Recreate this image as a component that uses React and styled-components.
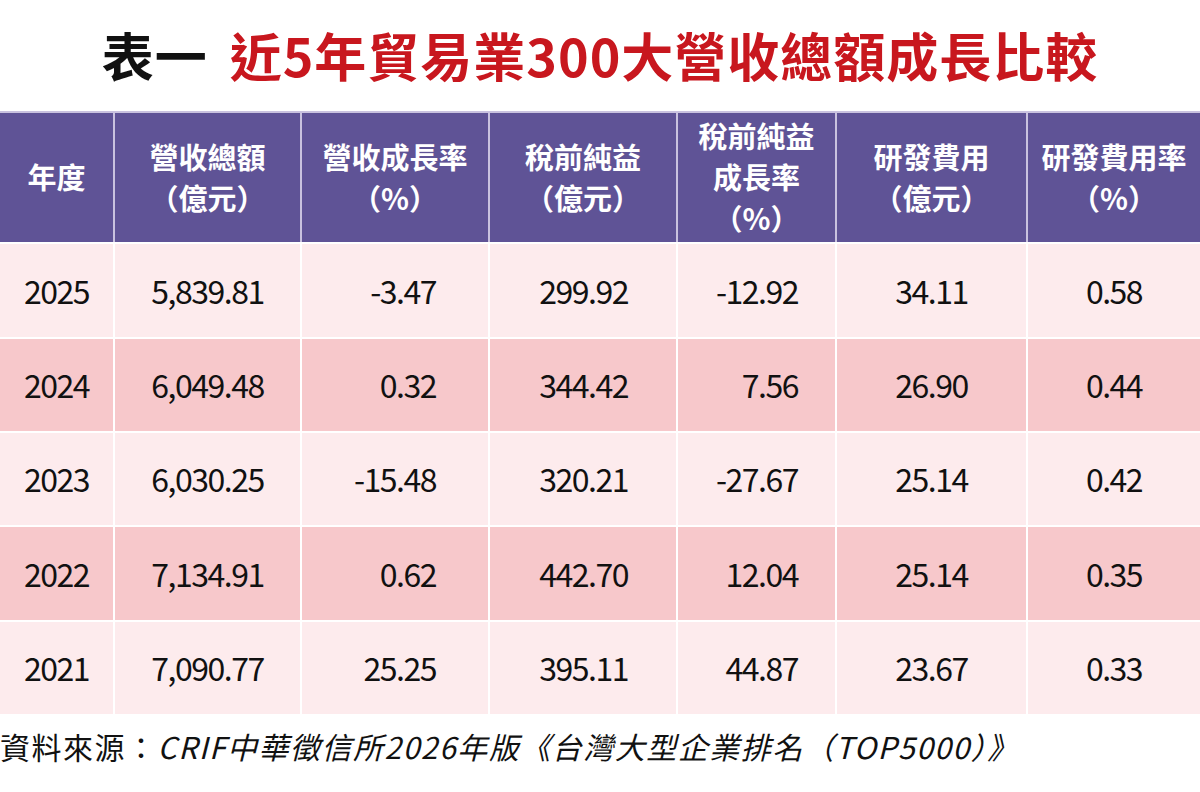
import styled, { createGlobalStyle } from "styled-components";

const GlobalStyle = createGlobalStyle`
  body {
    margin: 0;
    background: #ffffff;
    font-family: "Noto Sans CJK TC", "Noto Sans", sans-serif;
  }
`;

const COLS = "113px 187px 188px 188px 159px 191px 174px";

const Page = styled.div`
  width: 1200px;
  height: 792px;
  display: flex;
  flex-direction: column;
  background: #ffffff;
`;

const Title = styled.h1`
  margin: 0;
  height: 111px;
  display: flex;
  align-items: center;
  justify-content: center;
  gap: 22px;
  font-size: 52px;
  font-weight: 700;
  letter-spacing: 1px;
  line-height: 1;
  padding-bottom: 2px;
  box-sizing: border-box;
`;

const TitleLabel = styled.span`
  color: #111111;
`;

const TitleMain = styled.span`
  color: #c8171e;
`;

const Table = styled.div`
  display: flex;
  flex-direction: column;
`;

const HeaderRow = styled.div`
  display: grid;
  grid-template-columns: ${COLS};
  height: 131px;
  background: #5f5396;
  border-top: 2px solid #c9c2df;
  box-sizing: border-box;
`;

const HeadCell = styled.div`
  display: flex;
  flex-direction: column;
  align-items: center;
  justify-content: center;
  color: #ffffff;
  font-size: 29px;
  font-weight: 700;
  line-height: 41px;
  border-left: ${(p) => (p.$first ? "none" : "2px solid #c9c2df")};
  padding-bottom: 2px;
`;

const Row = styled.div`
  display: grid;
  grid-template-columns: ${COLS};
  height: ${(p) => p.$h}px;
  background: ${(p) => (p.$dark ? "#f7c8cb" : "#fdebed")};
  border-top: 2px solid #ffffff;
  box-sizing: border-box;
`;

const Cell = styled.div`
  display: flex;
  align-items: center;
  justify-content: ${(p) => (p.$align === "right" ? "flex-end" : "center")};
  padding-right: ${(p) => p.$pr || 0}px;
  font-size: 32px;
  letter-spacing: -1.5px;
  color: #111111;
  border-left: ${(p) => (p.$first ? "none" : "2px solid #ffffff")};
  padding-bottom: 2px;
`;

const Footer = styled.p`
  margin: 0;
  padding-top: 14px;
  font-size: 30px;
  letter-spacing: 1.5px;
  line-height: 36px;
  color: #111111;
  white-space: nowrap;
`;

const Source = styled.span`
  font-style: italic;
`;

const headers = [
  ["年度"],
  ["營收總額", "（億元）"],
  ["營收成長率", "（%）"],
  ["稅前純益", "（億元）"],
  ["稅前純益", "成長率", "（%）"],
  ["研發費用", "（億元）"],
  ["研發費用率", "（%）"],
];

// alignment per column: [align, paddingRight]
const layout = [
  ["center", 0],
  ["center", 0],
  ["right", 52],
  ["right", 48],
  ["right", 37],
  ["center", 0],
  ["center", 0],
];

const rows = [
  ["2025", "5,839.81", "-3.47", "299.92", "-12.92", "34.11", "0.58"],
  ["2024", "6,049.48", "0.32", "344.42", "7.56", "26.90", "0.44"],
  ["2023", "6,030.25", "-15.48", "320.21", "-27.67", "25.14", "0.42"],
  ["2022", "7,134.91", "0.62", "442.70", "12.04", "25.14", "0.35"],
  ["2021", "7,090.77", "25.25", "395.11", "44.87", "23.67", "0.33"],
];

const rowHeights = [95, 94, 94, 95, 94];

export default function App() {
  return (
    <>
      <GlobalStyle />
      <Page>
        <Title>
          <TitleLabel>表一</TitleLabel>
          <TitleMain>近5年貿易業300大營收總額成長比較</TitleMain>
        </Title>
        <Table>
          <HeaderRow>
            {headers.map((lines, i) => (
              <HeadCell key={i} $first={i === 0}>
                {lines.map((line) => (
                  <span key={line}>{line}</span>
                ))}
              </HeadCell>
            ))}
          </HeaderRow>
          {rows.map((row, r) => (
            <Row key={row[0]} $dark={r % 2 === 1} $h={rowHeights[r]}>
              {row.map((value, c) => (
                <Cell
                  key={c}
                  $first={c === 0}
                  $align={layout[c][0]}
                  $pr={layout[c][1]}
                >
                  {value}
                </Cell>
              ))}
            </Row>
          ))}
        </Table>
        <Footer>
          資料來源：
          <Source>CRIF中華徵信所2026年版《台灣大型企業排名（TOP5000）》</Source>
        </Footer>
      </Page>
    </>
  );
}
